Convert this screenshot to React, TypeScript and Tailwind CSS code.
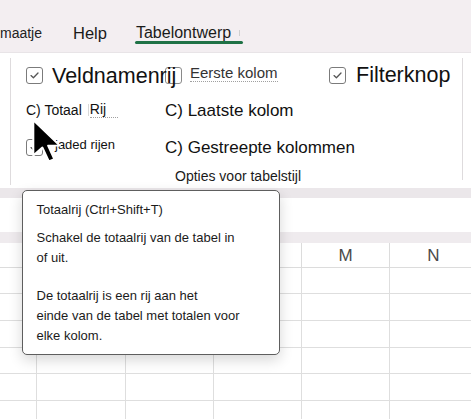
import React from "react";

function Box({ checked = false, className = "" }: { checked?: boolean; className?: string }) {
  return (
    <div
      className={
        "w-[17px] h-[17px] shrink-0 rounded-[3px] border-[1.5px] border-[#7b7b7b] flex items-center justify-center " +
        className
      }
    >
      {checked && (
        <svg width="9" height="7" viewBox="0 0 9 7" fill="none">
          <path d="M1 3.6 L3.4 5.8 L8 1" stroke="#555" strokeWidth="1.3" strokeLinecap="round" strokeLinejoin="round" />
        </svg>
      )}
    </div>
  );
}

const cols = ["J", "K", "L", "M", "N"];
const rowHeights = ["h-[26px]", "h-[27px]", "h-[27px]", "h-[26px]", "h-[27px]", "h-[27px]"];

export default function App() {
  return (
    <div
      className="relative w-[471px] h-[419px] overflow-hidden bg-white text-[#111]"
      style={{ fontFamily: '"Liberation Sans", Arial, sans-serif' }}
    >
      {/* Tab bar */}
      <div className="h-[52px] bg-[#f3eef1] pt-[25px]">
        <div className="flex items-center h-[16px] whitespace-nowrap">
          <span className="text-[14px] leading-none text-[#222]">maatje</span>
          <span className="ml-[31px] text-[16.5px] leading-none text-[#1a1a1a]">Help</span>
          <span className="relative ml-[29px] text-[16px] leading-none text-[#1a1a1a]">
            Tabelontwerp
            <span className="absolute left-[-1px] top-[16px] w-[108px] h-[3px] rounded-full bg-[#1f7246]" />
          </span>
          <span className="ml-[8px] w-px h-[6px] bg-[#cfcfcf]" />
        </div>
      </div>

      {/* Ribbon */}
      <div className="h-[136px] bg-white border-t border-[#e8e4e7] pt-[5px] flex">
        <div className="ml-[10px] w-px h-[127px] bg-[#dedbdd]" />
        <div className="flex-1 pl-[15px] pt-[2px]">
          <div className="grid grid-cols-[138px_165px_1fr] grid-rows-[30px_40px_34px]">
            {/* Row 1 */}
            <div className="flex items-center gap-[9px] whitespace-nowrap">
              <Box checked />
              <span className="relative top-[2px] z-10 text-[21.5px] leading-none">Veldnamenrij</span>
            </div>
            <div className="flex items-center whitespace-nowrap">
              <Box className="ml-[1px] border-[#8a8a8a]" />
              <span className="relative -top-[2px] ml-[8px] text-[15px] leading-none text-[#333] border-b border-dotted border-[#a0a0a0] pb-[1px]">
                Eerste kolom
              </span>
            </div>
            <div className="flex items-center gap-[10px] whitespace-nowrap">
              <Box checked />
              <span className="relative top-[1px] text-[21.5px] leading-none">Filterknop</span>
            </div>

            {/* Row 2 */}
            <div className="flex items-center whitespace-nowrap text-[14px] leading-none">
              <span>C) Totaal</span>
              <span className="ml-[6px] w-px h-[12px] bg-[#d8d8d8]" />
              <span className="ml-[1px] pr-[12px] border-b border-dotted border-[#a0a0a0] pb-[1px]">Rij</span>
            </div>
            <div className="flex items-center whitespace-nowrap">
              <span className="ml-[1px] text-[17px] leading-none">C) Laatste kolom</span>
            </div>
            <div />

            {/* Row 3 */}
            <div className="flex items-center whitespace-nowrap">
              <Box checked />
              <span className="relative -top-[3px] ml-[12px] text-[13px] leading-none">jaded rijen</span>
            </div>
            <div className="flex items-center whitespace-nowrap">
              <span className="ml-[1px] text-[17px] leading-none">C) Gestreepte kolommen</span>
            </div>
            <div />
          </div>
          <div className="h-[24px] flex items-center pl-[149px] whitespace-nowrap">
            <span className="text-[14px] leading-none text-[#1a1a1a]">Opties voor tabelstijl</span>
          </div>
        </div>
        <div className="mr-[8px] w-px h-[122px] bg-[#dedbdd]" />
      </div>

      {/* Bands */}
      <div className="h-[10px] bg-[#ebe7ea]" />
      <div className="h-[34px] bg-white" />
      <div className="h-[11px] bg-[#efebee]" />

      {/* Spreadsheet */}
      <div className="grid grid-cols-[37px_89px_88px_88px_88px_88px] w-[478px]">
        <div className="h-[25px] border-b border-r border-[#dcdcdc] bg-white" />
        {cols.map((c) => (
          <div
            key={c}
            className="h-[25px] border-b border-r border-[#dcdcdc] bg-white flex items-center justify-center text-[17px] leading-none text-[#4a4a4a]"
          >
            {c}
          </div>
        ))}
        {rowHeights.map((h, r) =>
          [0, 1, 2, 3, 4, 5].map((c) => (
            <div key={r + "-" + c} className={h + " border-b border-r border-[#dedede]"} />
          ))
        )}
      </div>

      {/* Tooltip */}
      <div className="absolute left-[22px] top-[190px] w-[258px] h-[165px] bg-white rounded-[5px] border-[1.5px] border-[#5e5e5e] shadow-[0_5px_14px_rgba(0,0,0,0.16)] pl-[13.5px] pt-[8.5px] text-[13px] leading-[20px] text-[#1b1b1b]">
        <div>Totaalrij (Ctrl+Shift+T)</div>
        <div className="mt-[8px]">
          Schakel de totaalrij van de tabel in
          <br />
          of uit.
        </div>
        <div className="mt-[18px]">
          De totaalrij is een rij aan het
          <br />
          einde van de tabel met totalen voor
          <br />
          elke kolom.
        </div>
      </div>

      {/* Cursor */}
      <svg
        className="absolute left-[31px] top-[118px]"
        width="32"
        height="45"
        viewBox="-1 -1 14 21"
        preserveAspectRatio="none"
      >
        <path
          d="M0 0 L0 16.5 L4 12.8 L6.8 19.2 L9.2 18.2 L6.5 11.9 L11.6 11.9 Z"
          fill="#000"
          stroke="#fff"
          strokeWidth="0.9"
          strokeLinejoin="round"
        />
      </svg>
    </div>
  );
}
